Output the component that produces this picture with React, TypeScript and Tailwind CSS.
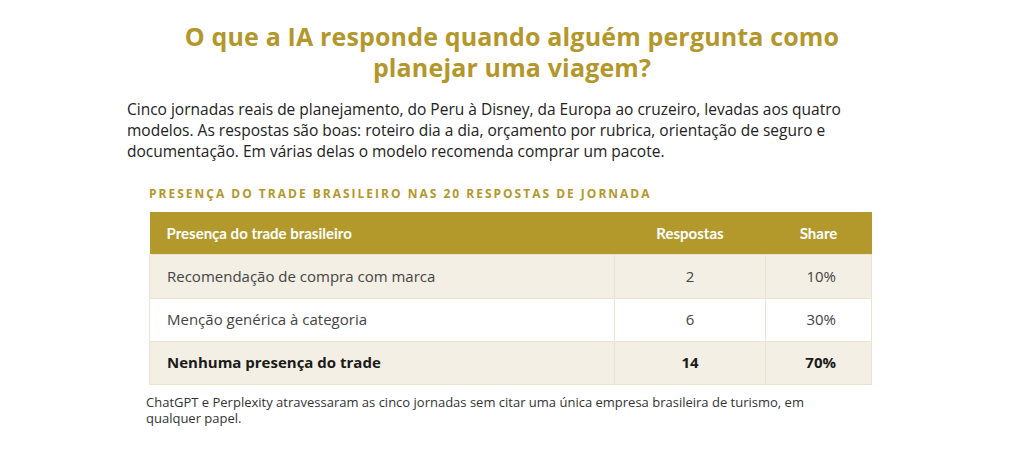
import React from 'react';

interface Row {
  label: string;
  count: number;
  share: string;
  bold?: boolean;
}

const rows: Row[] = [
  { label: 'Recomendação de compra com marca', count: 2, share: '10%' },
  { label: 'Menção genérica à categoria', count: 6, share: '30%' },
  { label: 'Nenhuma presença do trade', count: 14, share: '70%', bold: true },
];

const App: React.FC = () => {
  return (
    <div className="w-[1024px] h-[453px] bg-white overflow-hidden">
      <div className="w-[770px] mx-auto pt-[21px]">
        {/* Title */}
        <h2 className="text-center text-[#b3972b] font-bold text-[25px] leading-[31px] tracking-[0.15px] px-[20px] font-['Open_Sans',sans-serif]">
          O que a IA responde quando alguém pergunta como
          <br />
          planejar uma viagem?
        </h2>

        {/* Intro */}
        <p className="mt-[16px] text-[15.5px] leading-[21px] text-[#222] font-['Open_Sans',sans-serif]">
          Cinco jornadas reais de planejamento, do Peru à Disney, da Europa ao cruzeiro, levadas aos quatro
          <br />
          modelos. As respostas são boas: roteiro dia a dia, orçamento por rubrica, orientação de seguro e
          <br />
          documentação. Em várias delas o modelo recomenda comprar um pacote.
        </p>

        {/* Table block */}
        <div className="mt-[25px] ml-[22px] w-[723px]">
          <div className="text-[12px] leading-[14px] font-bold tracking-[2px] uppercase text-[#b3972b] font-['Open_Sans',sans-serif]">
            Presença do trade brasileiro nas 20 respostas de jornada
          </div>

          <table className="mt-[11px] w-full border-collapse font-['Open_Sans',sans-serif] text-[15px]">
            <thead>
              <tr className="bg-[#b3992b] text-white h-[42px]">
                <th className="text-left font-bold px-[17px] font-['Lato',sans-serif]">Presença do trade brasileiro</th>
                <th className="w-[151px] text-center font-bold font-['Lato',sans-serif]">Respostas</th>
                <th className="w-[106px] text-center font-bold font-['Lato',sans-serif]">Share</th>
              </tr>
            </thead>
            <tbody>
              {rows.map((r, i) => (
                <tr
                  key={i}
                  className={`${i === 0 ? 'h-[44px]' : 'h-[43px]'} ${i % 2 === 0 ? 'bg-[#f3efe4]' : 'bg-white'} ${
                    r.bold ? 'font-bold text-[#1a1a1a]' : 'text-[#444]'
                  }`}
                >
                  <td className="px-[17px] border border-[#ebe3cf]">{r.label}</td>
                  <td className="text-center border border-[#ebe3cf]">{r.count}</td>
                  <td className="text-right pr-[35px] border border-[#ebe3cf]">{r.share}</td>
                </tr>
              ))}
            </tbody>
          </table>

          <p className="mt-[9px] ml-[-3px] text-[13px] leading-[16px] text-[#333] font-['Open_Sans',sans-serif]">
            ChatGPT e Perplexity atravessaram as cinco jornadas sem citar uma única empresa brasileira de turismo, em
            <br />
            qualquer papel.
          </p>
        </div>
      </div>
    </div>
  );
};

export default App;
